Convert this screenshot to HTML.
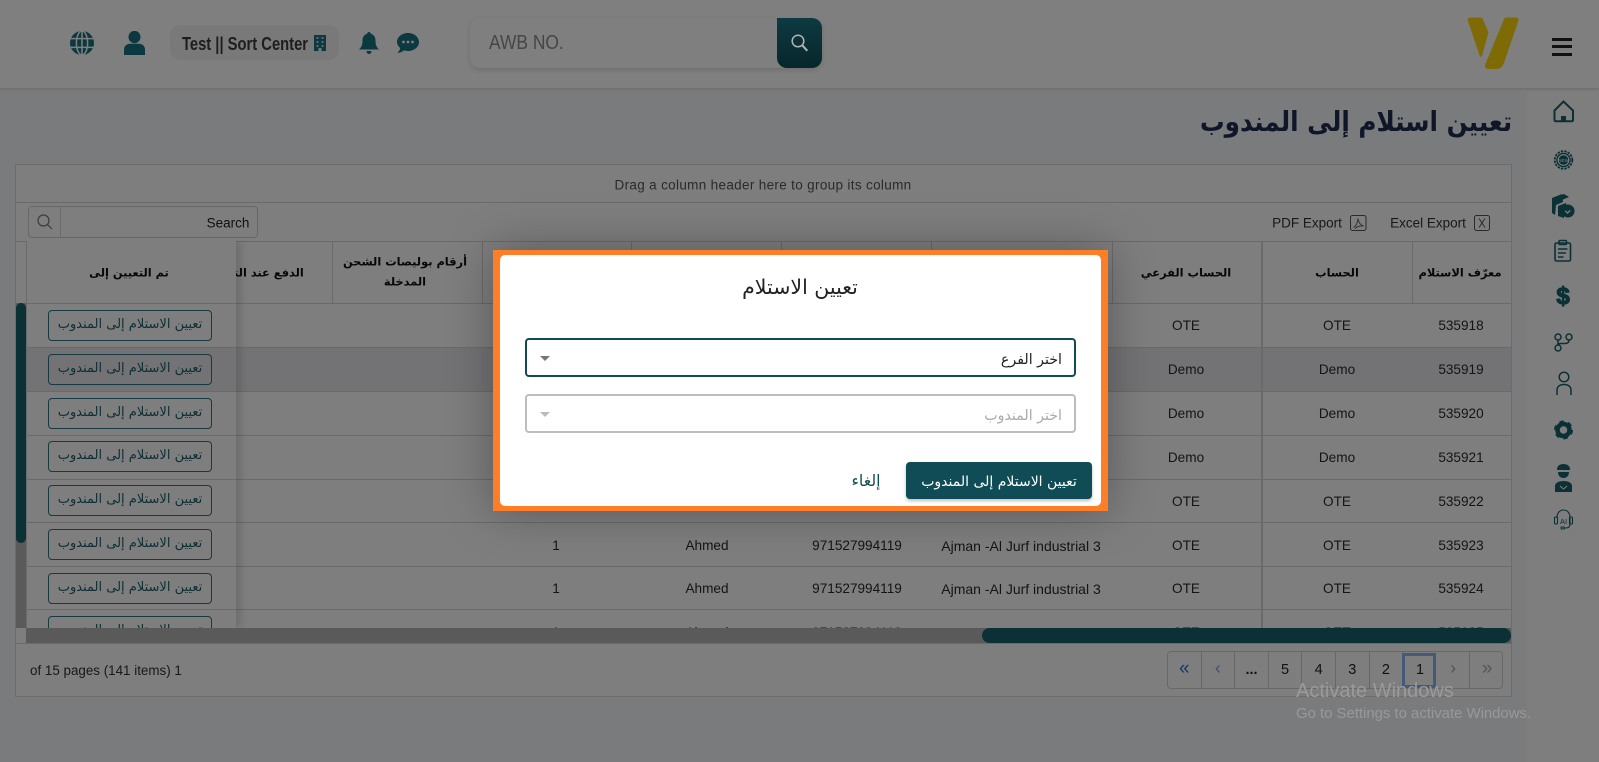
<!DOCTYPE html>
<html lang="ar"><head><meta charset="utf-8"><title>تعيين استلام إلى المندوب</title>
<style>
*{box-sizing:border-box}
html,body{margin:0;padding:0}
body{width:1599px;height:762px;overflow:hidden;position:relative;background:#f4f6fa;font-family:"Liberation Sans","DejaVu Sans",sans-serif;color:#1a1a1a}
.a{position:absolute}
.t{position:absolute;white-space:nowrap;transform:translate(-50%,-50%);line-height:1}
.ar{font-family:"DejaVu Sans",sans-serif;direction:rtl}
.c{font-size:13.6px;color:#2a2a2a}
.w{font-size:14px}
.h{font-size:11.4px;font-weight:bold;color:#111}
.line{position:absolute;background:#d4d4d4}
.btn{position:absolute;left:48px;width:164px;height:31px;border:1px solid #2a7482;border-radius:4px;background:transparent;color:#1d5f6b;font:13px "DejaVu Sans",sans-serif;direction:rtl;text-align:center;line-height:28px;white-space:nowrap}
#clip{position:absolute;left:26px;top:241px;width:1485px;height:387px;overflow:hidden}
#pg div{position:absolute;top:0;height:36px;width:33.6px;border-right:1px solid #cfcfcf;text-align:center;line-height:36px;font-size:14.5px;color:#222}
#ov{position:absolute;left:0;top:0;width:1599px;height:762px;background:rgba(0,0,0,.5)}
</style></head><body>

<!-- header -->
<div class="a" style="left:0;top:0;width:1599px;height:88px;background:#fff;box-shadow:0 1px 3px rgba(0,0,0,.12)"></div>
<svg class="a" style="left:70px;top:31px" width="24" height="24" viewBox="0 0 24 24"><circle cx="12" cy="12" r="12" fill="#18707e"/><g fill="none" stroke="#fff" stroke-width="1.5"><ellipse cx="12" cy="12" rx="5.6" ry="12"/><path d="M12 0v24M0 7.6h24M0 16.4h24"/></g></svg>
<svg class="a" style="left:124px;top:31px" width="21" height="24" viewBox="0 0 21 24"><ellipse cx="10.5" cy="6" rx="6" ry="6.2" fill="#18707e"/><path d="M0 24v-5.500C0 15 3 12.800 6 12.800h9c3 0 6 2.200 6 5.700V24z" fill="#18707e"/></svg>
<div class="a" style="left:170px;top:25px;width:169px;height:35px;background:#f3f3f3;border-radius:10px"></div>
<div class="t" style="left:245px;top:44px;font-size:18px;font-weight:bold;color:#3c3c3c;transform:translate(-50%,-50%) scaleX(.82)">Test || Sort Center</div>
<svg class="a" style="left:313px;top:35px" width="14" height="16" viewBox="0 0 14 16"><path d="M1 0h12v16H8.500v-3h-3v3H1z" fill="#18707e"/><path d="M3.500 2h2v2h-2zM8.500 2h2v2h-2zM3.500 6h2v2h-2zM8.500 6h2v2h-2zM3.500 10h2v2h-2zM8.500 10h2v2h-2z" fill="#fff" opacity=".7"/></svg>
<svg class="a" style="left:359px;top:32px" width="20" height="22" viewBox="0 0 20 22"><path d="M10 0c1 0 1.800.8 1.800 1.800 3 .8 4.700 3.400 4.700 6.700 0 4.500 1 6.500 3.500 9H0c2.500-2.500 3.500-4.500 3.500-9 0-3.300 1.700-5.900 4.700-6.700C8.200.8 9 0 10 0zM7.500 19h5c0 1.500-1 3-2.500 3s-2.500-1.500-2.500-3z" fill="#18707e"/></svg>
<svg class="a" style="left:397px;top:33px" width="22" height="20" viewBox="0 0 22 20"><path d="M11 0c6 0 11 4 11 9s-5 9-11 9c-1.500 0-2.800-.2-4-.7C5.500 18.800 3 20 .5 20c1.500-1.500 2.500-3.500 2.700-5C1.200 13.400 0 11.400 0 9c0-5 5-9 11-9z" fill="#18707e"/><circle cx="6.500" cy="9" r="1.400" fill="#fff"/><circle cx="11" cy="9" r="1.400" fill="#fff"/><circle cx="15.500" cy="9" r="1.400" fill="#fff"/></svg>
<div class="a" style="left:470px;top:18px;width:352px;height:50px;background:#fff;border-radius:10px;box-shadow:0 2px 6px rgba(0,0,0,.14)"></div>
<div class="a" style="left:489px;top:33px;font-size:20px;line-height:20px;color:#8c8c8c;transform:scaleX(.87);transform-origin:left center;white-space:nowrap">AWB NO.</div>
<div class="a" style="left:777px;top:18px;width:45px;height:50px;border-radius:0 10px 10px 10px;background:linear-gradient(#1c7482,#0c4e58)"></div>
<svg class="a" style="left:1467px;top:17px" width="52" height="52" viewBox="0 0 52 52"><path d="M1 4C0 2 1 .5 3 .5h9c2 0 3.500.5 4.300 2.500l5.200 12.500L15 39c-.5 1-1.800 1-2.200 0z" fill="#ffd60a"/><path d="M37 2c.5-1 1.500-1.500 2.500-1.500H49c2 0 3 1.500 2.300 3.500L37 46c-1.200 3.500-3.500 6-7.500 6H21c-2.500 0-3.500-2-3-4z" fill="#ffd60a"/></svg>
<div class="a" style="left:1552px;top:38px;width:20px;height:3px;background:#222"></div>
<div class="a" style="left:1552px;top:45px;width:20px;height:3px;background:#222"></div>
<div class="a" style="left:1552px;top:53px;width:20px;height:3px;background:#222"></div>

<!-- sidebar -->
<div class="a" style="left:1527px;top:91px;width:72px;height:671px;background:#fcfcfc"></div>
<svg class="a" style="left:1527px;top:91px" width="72" height="450" viewBox="0 0 72 450" fill="none" stroke="#16606c" stroke-width="1.800">
<path d="M27.500 19.500l9-9 9.500 9v9.500c0 .8-.5 1.200-1.200 1.200H28.700c-.8 0-1.200-.4-1.200-1.200z" stroke-width="2"/><path d="M34 30v-5h5v5z" fill="#16606c" stroke="none"/>
<g transform="translate(36.500 69)"><circle r="6.600" stroke-width="1.400"/><circle r="4.800" fill="#16606c" stroke="none"/><circle r="8.800" stroke-width="1.800" stroke-dasharray="2.400 1.100"/><text y="1.800" font-family="Liberation Sans,sans-serif" font-size="4.500" fill="#fff" stroke="none" text-anchor="middle">NEW</text></g>
<g fill="#16606c" stroke="none"><path d="M25 107l10-4 1 8-7 3-1 10-3-2zM30 106l7-3 5 3-7 3zM31 115l8-3 1 6c-2 2-3 5-3 9l-6-2z"/><circle cx="41" cy="120" r="6.500"/></g><path d="M38.200 119.800l2.400 2.300 2.700-2.800" stroke="#fff" stroke-width="1.300"/>
<g stroke-width="1.600"><rect x="28" y="152" width="15.500" height="18" rx="1.500"/><rect x="32" y="149.500" width="7.500" height="4" rx="1"/><path d="M31 158h9.500M31 162h8M31 166h5.500"/></g>
<text x="36" y="213" font-family="Liberation Sans,sans-serif" font-size="24" font-weight="bold" fill="#16606c" stroke="#16606c" stroke-width="1.200" text-anchor="middle">$</text>
<g stroke-width="1.500"><circle cx="31" cy="246" r="3"/><circle cx="42" cy="246" r="3"/><circle cx="31" cy="257" r="3"/><path d="M31 249v5M42 249c0 3-2 3.500-4 3.500h-4c-2 0-3 .5-3 1.500"/></g>
<g stroke-width="1.500"><circle cx="37" cy="286" r="4.800"/><path d="M30 304v-4.500c0-4 3-6 7-6s7 2 7 6v4.500"/></g>
<g transform="translate(36.500 339)"><circle r="6" stroke-width="4.500"/><circle r="8" stroke-width="3" stroke-dasharray="4.200 4.180"/></g>
<g fill="#16606c" stroke="none"><path d="M30 378c0-3 3-5 6.500-5s6.500 2 6.500 5v1H30z"/><path d="M31 381h11c0 4-2.500 6-5.500 6S31 385 31 381z"/><path d="M28 401v-6c0-3 3.500-5 8.500-5s8.500 2 8.500 5v6z"/></g><path d="M31 383c-2-2-2-4-1-5M42 383c2-2 2-4 1-5M33 395l3.500 3 3.500-3" stroke="#fcfcfc" stroke-width="1"/>
<g stroke-width="1.100"><rect x="27.500" y="426" width="3" height="7" rx="1"/><rect x="42.500" y="426" width="3" height="7" rx="1"/><path d="M30 427c0-5 2.500-8 6.500-8s6.500 3 6.500 8v6c0 2.500-1.500 4-4 4h-2"/><rect x="34" y="436" width="3.500" height="2" rx="1"/></g>
<text x="36.500" y="433" font-family="Liberation Sans,sans-serif" font-size="7.500" fill="#16606c" stroke="none" text-anchor="middle">AI</text>
</svg>

<!-- title -->
<div class="a ar" style="right:87px;top:104px;font-size:27.500px;font-weight:bold;line-height:36px;color:#1e2c50;white-space:nowrap;transform:scaleX(.897);transform-origin:right center">تعيين استلام إلى المندوب</div>

<!-- card -->
<div class="a" style="left:15px;top:164px;width:1497px;height:533px;background:#fcfcfc;border:1px solid #d6d8da"></div>
<div class="line" style="left:16px;top:202px;width:1495px;height:1px"></div>
<div class="line" style="left:16px;top:241px;width:1495px;height:1px"></div>
<div class="line" style="left:16px;top:303px;width:1495px;height:1px"></div>
<div class="t" style="left:763px;top:185px;font-size:13.500px;letter-spacing:.33px;color:#555">Drag a column header here to group its column</div>

<div class="a" style="left:28px;top:206px;width:230px;height:32px;border:1px solid #cfcfcf;border-radius:4px"></div>
<div class="line" style="left:60px;top:206px;width:1px;height:32px"></div>
<svg class="a" style="left:37px;top:214px" width="16" height="16" viewBox="0 0 16 16" fill="none" stroke="#777" stroke-width="1.200"><circle cx="6.500" cy="6.500" r="5.500"/><path d="M10.500 10.500l4.500 4.500"/></svg>
<div class="t" style="left:228px;top:223px;font-size:13.500px;color:#222">Search</div>

<div class="t" style="left:1307px;top:223px;font-size:13.500px;color:#333">PDF Export</div>
<svg class="a" style="left:1350px;top:215px" width="17" height="16" viewBox="0 0 17 16" fill="none" stroke="#555" stroke-width="1"><rect x=".5" y=".5" width="15.500" height="15" rx="2"/><path d="M3.500 12.500c2-1 4-4 4.500-9 .5 4 2 6.500 5.500 7.500-3-.3-6 0-8.500 2.500" stroke-width=".9"/></svg>
<div class="t" style="left:1428px;top:223px;font-size:13.500px;color:#333">Excel Export</div>
<svg class="a" style="left:1474px;top:215px" width="16" height="16" viewBox="0 0 16 16" fill="none" stroke="#555" stroke-width="1"><rect x=".5" y=".5" width="15" height="15" rx="2"/><path d="M5 3.500l6 9M11 3.500l-6 9"/></svg>

<!-- table body -->
<div id="clip">
<div class="a" style="left:0;top:106px;width:1485px;height:44px;background:#e6e7ea"></div>
<div class="line" style="left:0;top:62px;width:1485px;height:1px"></div>
<div class="line" style="left:0;top:106px;width:1485px;height:1px"></div>
<div class="line" style="left:0;top:150px;width:1485px;height:1px"></div>
<div class="line" style="left:0;top:194px;width:1485px;height:1px"></div>
<div class="line" style="left:0;top:238px;width:1485px;height:1px"></div>
<div class="line" style="left:0;top:281px;width:1485px;height:1px"></div>
<div class="line" style="left:0;top:325px;width:1485px;height:1px"></div>
<div class="line" style="left:0;top:368px;width:1485px;height:1px"></div>
<!-- header verticals -->
<div class="line" style="left:306px;top:0;width:1px;height:62px"></div>
<div class="line" style="left:456px;top:0;width:1px;height:62px"></div>
<div class="line" style="left:605px;top:0;width:1px;height:62px"></div>
<div class="line" style="left:755px;top:0;width:1px;height:62px"></div>
<div class="line" style="left:905px;top:0;width:1px;height:62px"></div>
<div class="line" style="left:1086px;top:0;width:1px;height:62px"></div>
<div class="line" style="left:1235px;top:0;width:2px;height:387px"></div>
<div class="line" style="left:1386px;top:0;width:1px;height:62px"></div>
<!-- header text -->
<div class="t ar h" style="left:1434px;top:32px">معرّف الاستلام</div>
<div class="t ar h" style="left:1311px;top:32px">الحساب</div>
<div class="t ar h" style="left:1160px;top:32px">الحساب الفرعي</div>
<div class="t ar h" style="left:530px;top:32px">إجمالي عدد الشحنات</div>
<div class="t ar h" style="left:379px;top:21px">أرقام بوليصات الشحن</div>
<div class="t ar h" style="left:379px;top:41px">المدخلة</div>
<div class="t ar h" style="left:228px;top:32px">الدفع عند التسليم</div>
<!-- rows -->
<div class="t c" style="left:1435px;top:85px">535918</div><div class="t c" style="left:1311px;top:85px">OTE</div><div class="t c" style="left:1160px;top:85px">OTE</div>
<div class="t c" style="left:1435px;top:129px">535919</div><div class="t c" style="left:1311px;top:129px">Demo</div><div class="t c" style="left:1160px;top:129px">Demo</div>
<div class="t c" style="left:1435px;top:173px">535920</div><div class="t c" style="left:1311px;top:173px">Demo</div><div class="t c" style="left:1160px;top:173px">Demo</div>
<div class="t c" style="left:1435px;top:217px">535921</div><div class="t c" style="left:1311px;top:217px">Demo</div><div class="t c" style="left:1160px;top:217px">Demo</div>
<div class="t c" style="left:1435px;top:261px">535922</div><div class="t c" style="left:1311px;top:261px">OTE</div><div class="t c" style="left:1160px;top:261px">OTE</div>
<div class="t c" style="left:1435px;top:305px">535923</div><div class="t c" style="left:1311px;top:305px">OTE</div><div class="t c" style="left:1160px;top:305px">OTE</div>
<div class="t c w" style="left:995px;top:305px">Ajman -Al Jurf industrial 3</div><div class="t c" style="left:831px;top:305px">971527994119</div><div class="t c" style="left:681px;top:305px">Ahmed</div><div class="t c" style="left:530px;top:305px">1</div>
<div class="t c" style="left:1435px;top:348px">535924</div><div class="t c" style="left:1311px;top:348px">OTE</div><div class="t c" style="left:1160px;top:348px">OTE</div>
<div class="t c w" style="left:995px;top:348px">Ajman -Al Jurf industrial 3</div><div class="t c" style="left:831px;top:348px">971527994119</div><div class="t c" style="left:681px;top:348px">Ahmed</div><div class="t c" style="left:530px;top:348px">1</div>
<div class="t c" style="left:1435px;top:392px">535925</div><div class="t c" style="left:1311px;top:392px">OTE</div><div class="t c" style="left:1160px;top:392px">OTE</div>
<div class="t c w" style="left:995px;top:392px">Ajman -Al Jurf industrial 3</div><div class="t c" style="left:831px;top:392px">971527994119</div><div class="t c" style="left:681px;top:392px">Ahmed</div><div class="t c" style="left:530px;top:392px">1</div>
<!-- sticky column -->
<div class="a" style="left:0;top:0;width:210px;height:387px;background:#fcfcfc;box-shadow:5px 0 7px rgba(0,0,0,.13)"></div>
<div class="a" style="left:0;top:106px;width:210px;height:44px;background:#e6e7ea"></div>
<div class="line" style="left:0;top:62px;width:210px;height:1px"></div>
<div class="line" style="left:0;top:106px;width:210px;height:1px"></div>
<div class="line" style="left:0;top:150px;width:210px;height:1px"></div>
<div class="line" style="left:0;top:194px;width:210px;height:1px"></div>
<div class="line" style="left:0;top:238px;width:210px;height:1px"></div>
<div class="line" style="left:0;top:281px;width:210px;height:1px"></div>
<div class="line" style="left:0;top:325px;width:210px;height:1px"></div>
<div class="line" style="left:0;top:368px;width:210px;height:1px"></div>
<div class="t ar h" style="left:103px;top:32px">تم التعيين إلى</div>
</div>
<div class="btn" style="top:310px">تعيين الاستلام إلى المندوب</div>
<div class="btn" style="top:354px">تعيين الاستلام إلى المندوب</div>
<div class="btn" style="top:398px">تعيين الاستلام إلى المندوب</div>
<div class="btn" style="top:441px">تعيين الاستلام إلى المندوب</div>
<div class="btn" style="top:485px">تعيين الاستلام إلى المندوب</div>
<div class="btn" style="top:529px">تعيين الاستلام إلى المندوب</div>
<div class="btn" style="top:573px">تعيين الاستلام إلى المندوب</div>
<div style="position:absolute;left:48px;top:616px;width:164px;height:12px;overflow:hidden"><div class="btn" style="left:0;top:0">تعيين الاستلام إلى المندوب</div></div>

<!-- scrollbars -->
<div class="a" style="left:26px;top:241px;width:1px;height:387px;background:#d4d4d4"></div>
<div class="a" style="left:16px;top:303px;width:10px;height:325px;background:#b4b4b4"></div>
<div class="a" style="left:16px;top:303px;width:10px;height:240px;background:#16606c;border-radius:5px"></div>
<div class="a" style="left:26px;top:628px;width:1485px;height:15px;background:#b4b4b4"></div>
<div class="a" style="left:982px;top:628px;width:529px;height:15px;background:#16606c;border-radius:8px"></div>
<div class="line" style="left:16px;top:643px;width:1495px;height:1px"></div>

<!-- footer -->
<div class="a" style="left:30px;top:663px;font-size:13.400px;line-height:16px;color:#333;white-space:nowrap">of 15 pages (141 items) 1</div>
<div id="pg" class="a" style="left:1167px;top:651px;width:336px;height:38px;border:1px solid #d0d0d0;border-radius:4px">
<div style="left:0;color:#2f6fd0;font-size:19px;line-height:33px">«</div><div style="left:33.600px;color:#7fa3d8;font-size:18px;line-height:33px">‹</div><div style="left:67.200px;font-weight:bold">...</div><div style="left:100.800px">5</div><div style="left:134.400px">4</div><div style="left:168px">3</div><div style="left:201.600px">2</div><div style="left:235.200px;border-right:0">1</div><div style="left:268.800px;color:#aaa;font-size:18px;line-height:33px">›</div><div style="left:302.400px;color:#aaa;border-right:0;font-size:19px;line-height:33px">»</div>
</div>
<div class="a" style="left:1402px;top:653px;width:34px;height:35px;border:3px solid #8cb4f0"></div>

<div id="ov"></div>

<!-- above overlay -->
<svg class="a" style="left:790px;top:33px" width="20" height="20" viewBox="0 0 20 20" fill="none" stroke="#b0b5b5" stroke-width="1.500"><circle cx="8" cy="8" r="5.800"/><path d="M12.300 12.300l5 5.500" stroke-width="2"/></svg>
<div class="a" style="left:1296px;top:679px;font-size:20px;line-height:24px;color:#9a9a9a;white-space:nowrap">Activate Windows</div>
<div class="a" style="left:1296px;top:705px;font-size:14.900px;line-height:18px;color:#999;white-space:nowrap">Go to Settings to activate Windows.</div>

<!-- modal -->
<div class="a" style="left:493px;top:250px;width:615px;height:261px;background:#fd7e27;box-shadow:0 0 45px rgba(0,0,0,.3)"></div>
<div class="a" style="left:500px;top:255px;width:601px;height:251px;background:#fff;border-radius:5px"></div>
<div class="t ar" style="left:800px;top:287px;font-size:20.500px;color:#222">تعيين الاستلام</div>
<div class="a" style="left:525px;top:338px;width:551px;height:39px;border:2px solid #0f4c55;border-radius:4px"></div>
<div class="a ar" style="right:537px;top:351px;font-size:14.200px;line-height:18px;color:#222;white-space:nowrap">اختر الفرع</div>
<div class="a" style="left:540px;top:356px;width:0;height:0;border-left:5px solid transparent;border-right:5px solid transparent;border-top:5px solid #777"></div>
<div class="a" style="left:525px;top:394px;width:551px;height:39px;border:2px solid #bdbdbd;border-radius:4px"></div>
<div class="a ar" style="right:537px;top:407px;font-size:14.200px;line-height:18px;color:#aaa;white-space:nowrap">اختر المندوب</div>
<div class="a" style="left:540px;top:412px;width:0;height:0;border-left:5px solid transparent;border-right:5px solid transparent;border-top:5px solid #bbb"></div>
<div class="t ar" style="left:866px;top:481px;font-size:15.800px;color:#0f4c55">إلغاء</div>
<div class="a" style="left:906px;top:462px;width:186px;height:37px;background:#0f4c55;border-radius:4px;box-shadow:0 2px 3px rgba(0,0,0,.25)"></div>
<div class="t ar" style="left:999px;top:482px;font-size:14px;color:#fff">تعيين الاستلام إلى المندوب</div>
</body></html>
